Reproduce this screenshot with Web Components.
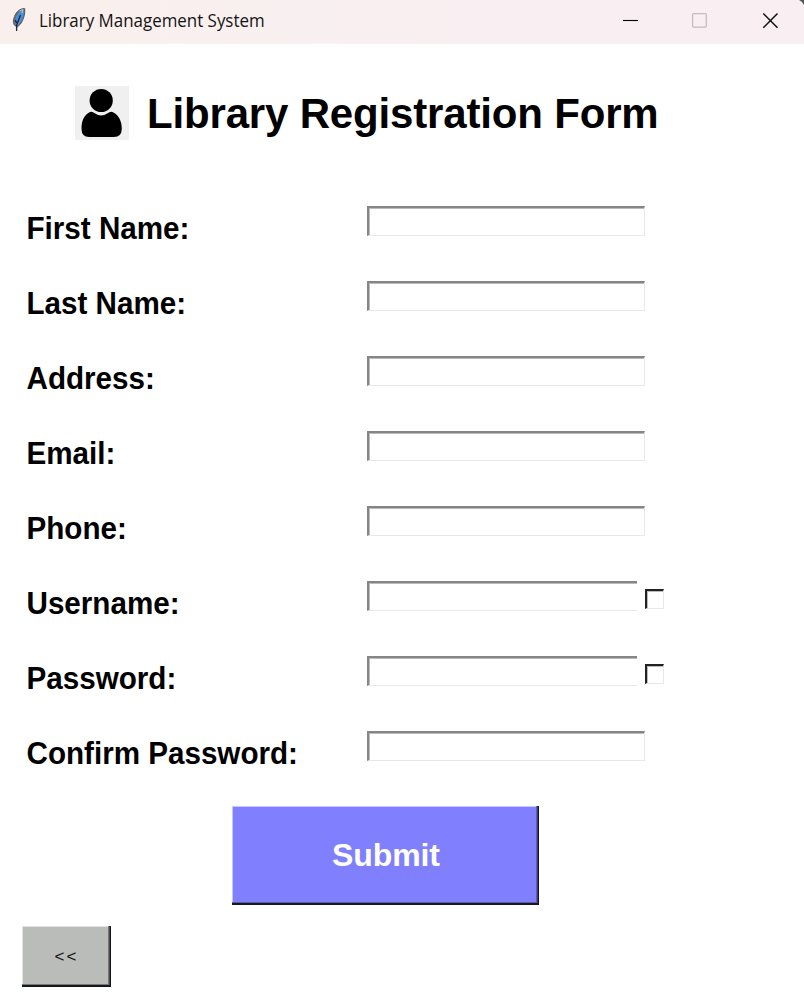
<!DOCTYPE html>
<html lang="en"><head><meta charset="utf-8"><title>Library Management System</title>
<style>html,body{margin:0;height:100%;background:#fff;overflow:hidden}</style></head>
<body><library-app></library-app>
<script>
const define=(name,html)=>customElements.define(name,class extends HTMLElement{
  constructor(){super();const t=document.createElement('template');t.innerHTML=html;
    this.attachShadow({mode:'open'}).append(t.content.cloneNode(true));}
});
define('title-bar',`<style>
:host{display:flex;height:44px;box-sizing:border-box;background:linear-gradient(90deg,#f9f0ed,#f9eff3 70%,#f9eff2);font:18px/24px "Open Sans",sans-serif;color:#141414}
.feather{width:16px;height:26px;margin:7px 12px 0 11px;flex:none}
.name{margin-top:8px;white-space:nowrap;transform:scaleX(.94);transform-origin:left;flex:1}
.controls{display:block;width:204px;height:44px;flex:none}
</style>
<svg class="feather" viewBox="0 0 16 26"><path d="M5.5 24V19.5C1.5 18 2 13.5 3.5 9.5C5.5 4.5 9 1.5 13.7 1.6C14.3 6.5 12.5 13 9.5 17L6.2 20" fill="#72706e" stroke="#555" stroke-width="1"/><path d="M4.4 17.5C3.2 12 7 4 12.4 2.8C13.6 8 11 14.5 7 18Z" fill="#4690e0"/><path d="M5.6 24V18L9.5 8M4.4 13l1 3" stroke="#172639" stroke-width="1.3" fill="none"/><path d="M8.5 4L12 2.5 11 6" stroke="#b5c9dc" fill="none"/></svg>
<span class="name"><slot></slot></span>
<svg class="controls" viewBox="0 0 204 44" fill="none"><path d="M23 20.5H38" stroke="#000" stroke-width="1.1"/><rect x="92.6" y="13.7" width="13.7" height="13.4" rx="1" stroke="#c5bcc0" stroke-width="1.3"/><path d="M163.3 13.5L177.5 27.7M177.5 13.5L163.3 27.7" stroke="#111" stroke-width="1.5"/><path d="M199 0H204V5Q202 1 199 0" fill="#555"/></svg>`);
define('form-heading',`<style>
:host{display:flex;padding:42px 0 0 75px;height:120px;box-sizing:content-box}
svg{width:54px;height:54px;background:#f0f0f0;flex:none}
h1{margin:4px 0 0 18px;font:bold 42px/48px "Liberation Sans",Arial,sans-serif;letter-spacing:-.17px;color:#000;white-space:nowrap}
</style><svg viewBox="0 0 54 54"><circle cx="26.2" cy="14.5" r="11.6"/><path d="M14.5 26.2Q16.5 25.2 18.5 26.6Q26 32.2 34 26.6Q36 25.2 38 26.2C44 29 47 36 46.8 43Q46.5 51 39 51H14Q6.7 51 6.5 43C6.4 35 9 29 14.5 26.2Z"/></svg><h1><slot></slot></h1>`);
define('form-field',`<style>
:host{display:flex;height:75px;padding-left:26px}
label{width:341px;flex:none;margin-top:4px;font:bold 31.5px/36px "Liberation Sans",Arial,sans-serif;color:#000;white-space:nowrap}
label span{display:inline-block;transform:translateX(.5px) scaleX(.94);transform-origin:left}
input{display:block;box-sizing:border-box;width:278px;height:30px;margin:0;padding:0;border:solid;border-width:2px 1px 1px 2px;border-color:#858585 #e8e8e8 #e8e8e8 #858585;background:#fff;border-radius:0;outline:0;appearance:none;box-shadow:inset 1px 1px #bbb}
:host([checked-field]) input{width:270px;border-right:0}
i{display:none;box-sizing:border-box;width:19px;height:20px;margin:8px 0 0 8px;border:solid;border-width:2px 1px 1px 2px;border-color:#222 #e7e7e7 #e7e7e7 #222;box-shadow:inset 1px 1px #bbb}
:host([checked-field]) i{display:block}
</style><label><span><slot></slot></span></label><input type="text"><i></i>`);
define('raised-button',`<style>
:host{display:block}
button{display:block;box-sizing:border-box;width:100%;height:100%;margin:0;padding:var(--inset,0);border:0;border-radius:0;background:var(--face);color:var(--ink);font:var(--type);letter-spacing:var(--track,0);box-shadow:inset -1.5px -2px #16161f,inset -3px -3px var(--shade),inset 1px 1px var(--light)}
</style><button><slot></slot></button>`);
define('library-app',`<style>
:host{display:block;width:804px;height:1000px;background:#fff}
.submit{width:307px;height:99px;margin-left:232px;--inset:0 0 2px 1px;--face:#8080ff;--ink:#fff;--shade:#5c5cb8;--light:#c7c7ff;--type:bold 32px/36px "Liberation Sans",Arial,sans-serif;--track:-.1px}
.back{width:89px;height:61px;margin:21px 0 0 22px;--face:#babcba;--ink:#111;--shade:#777;--light:#e2e2e2;--type:17px/20px "Liberation Sans",Arial,sans-serif;--track:2px}
</style><title-bar>Library Management System</title-bar><form-heading>Library Registration Form</form-heading>
<main><form-field>First Name:</form-field><form-field>Last Name:</form-field><form-field>Address:</form-field><form-field>Email:</form-field><form-field>Phone:</form-field><form-field checked-field>Username:</form-field><form-field checked-field>Password:</form-field><form-field>Confirm Password:</form-field></main>
<raised-button class="submit">Submit</raised-button><raised-button class="back">&lt;&lt;</raised-button>`);
</script></body></html>
